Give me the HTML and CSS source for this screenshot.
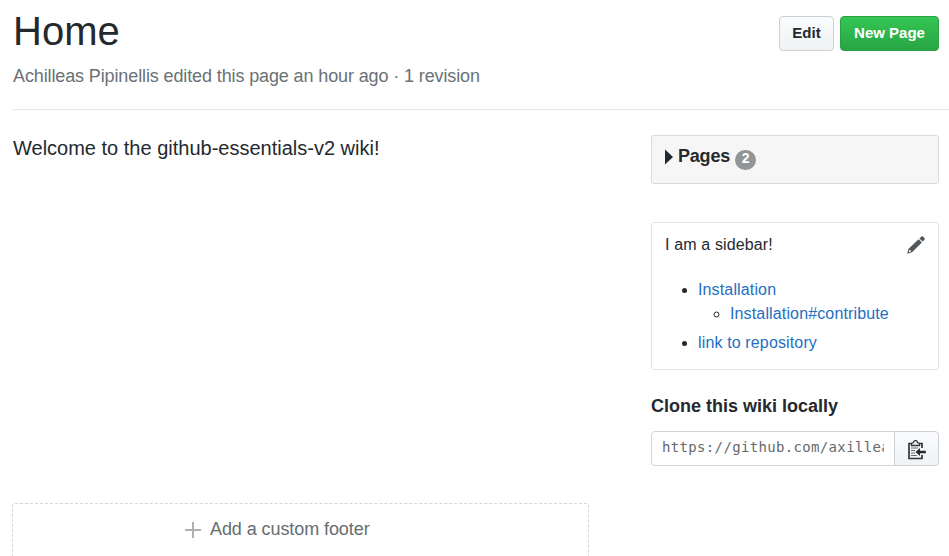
FILE: index.html
```html
<!DOCTYPE html>
<html lang="en">
<head>
<meta charset="utf-8">
<title>Home</title>
<link rel="stylesheet" href="styles.css">
</head>
<body>
<header class="page-head">
  <div class="head-text">
    <h1><span>Home</span></h1>
    <p class="meta"><span>Achilleas Pipinellis edited this page an hour ago · 1 revision</span></p>
  </div>
  <div class="actions">
    <button class="btn">Edit</button>
    <button class="btn btn-primary">New Page</button>
  </div>
</header>
<div class="layout">
  <main>
    <p class="welcome"><span>Welcome to the github-essentials-v2 wiki!</span></p>
    <a class="add-footer">
      <svg width="16" height="16" viewBox="0 0 16 16"><path d="M8 0v16M0 8h16" stroke="#afb0b0" stroke-width="2"/></svg>
      <span>Add a custom footer</span>
    </a>
  </main>
  <aside>
    <section class="pages">
      <svg width="8" height="16" viewBox="0 0 8 16"><path d="M0 0.5L8 8L0 15.5z" fill="#24292e"/></svg>
      <strong>Pages</strong>
      <span class="counter">2</span>
    </section>
    <section class="custom">
      <svg class="pencil" width="18" height="18" viewBox="0 0 18 18"><path fill="#50565a" fill-rule="evenodd" d="M12.4 2.6L14.5.6Q15.2 0 15.9.6L17.5 2.3Q18.1 3 17.5 3.7L15.5 5.6zM11.6 3.2L14.9 6.5L5 16.3L.2 17.7L1.4 13zM2.4 14L1.7 16.3L4 15.6L3.8 14.3z"/></svg>
      <p>I am a sidebar!</p>
      <ul>
        <li><a>Installation</a>
          <ul><li><a>Installation#contribute</a></li></ul>
        </li>
        <li><a>link to repository</a></li>
      </ul>
    </section>
    <h2><span>Clone this wiki locally</span></h2>
    <div class="clone">
      <div class="url"><span>https://github.com/axilleas/github-essentials-v2.wiki.git</span></div>
      <button class="copy" aria-label="Copy">
        <svg width="18" height="20" viewBox="0 0 18 20"><path d="M4 3.5H1V18.5H14V15M11 3.5H14V8" fill="none" stroke="#30363a" stroke-width="1.7"/><path d="M3.5 5.5V3.5L5.5 2.5Q5.7.6 7.5.6T9.5 2.5L11.5 3.5V5.5z" fill="none" stroke="#30363a" stroke-width="1.3"/><path d="M3 8h7M3 10.5h4M3 13h4M3 15.5h6" stroke="#666b6e" stroke-width="1.2"/><path d="M7.5 12L12 8V10.7H17.8V13.3H12V16z" fill="#24292e"/></svg>
      </button>
    </div>
  </aside>
</div>
</body>
</html>
```
FILE: styles.css
```css
* { box-sizing: border-box; }
html { overflow: hidden; }
body {
  margin: 0;
  height: 556px;
  overflow: hidden;
  background: #fff;
  color: #24292e;
  font-family: "Liberation Sans", Arial, sans-serif;
}
h1, h2, p, ul { margin: 0; padding: 0; }
.page-head {
  display: flex;
  justify-content: space-between;
  height: 110px;
  margin-left: 13px;
  padding-right: 10px;
  border-bottom: 1px solid #e5e9e8;
}
h1 { padding-top: 8px; font-size: 40px; line-height: 46px; font-weight: 400; }
.meta {
  padding-top: 12px;
  font-size: 18px;
  line-height: 20px;
  letter-spacing: -.12px;
  color: #6a7176;
  white-space: nowrap;
}
.actions { display: flex; gap: 6px; padding-top: 16px; }
.btn {
  width: 55px;
  height: 35px;
  padding: 0 0 3px;
  border: 1px solid #cdcfd1;
  border-radius: 4px;
  background: linear-gradient(#fafbfc, #eff3f6);
  color: #24292e;
  font: bold 15px "Liberation Sans", Arial, sans-serif;
  white-space: nowrap;
}
.btn-primary {
  width: 99px;
  border-color: #28a044;
  background: linear-gradient(#34c653, #28a544);
  color: #fff;
}
.layout { display: flex; justify-content: space-between; padding: 0 10px 0 12px; }
main { display: flex; flex-direction: column; width: 577px; height: 446px; overflow: hidden; }
.welcome {
  flex: none;
  height: 393px;
  padding: 26px 0 0 1px;
  font-size: 20px;
  line-height: 24px;
  white-space: nowrap;
}
.add-footer {
  display: flex;
  flex: none;
  height: 80px;
  padding: 14px 0 0 172px;
  gap: 9px;
  border: 1px dashed #d4d6d8;
  border-radius: 3px;
  color: #666d71;
  font-size: 18px;
  line-height: 22px;
  letter-spacing: -.08px;
}
.add-footer svg { margin-top: 4px; }
aside { width: 288px; padding-top: 25px; }
.pages {
  display: flex;
  height: 49px;
  padding: 10px 0 0 13px;
  border: 1px solid #d9dadb;
  border-radius: 3px;
  background: #f6f6f6;
  font-size: 18px;
  line-height: 20px;
}
.pages strong { letter-spacing: -.2px; }
.pages svg { margin: 3px 5px 0 0; }
.counter {
  width: 21px;
  height: 20px;
  margin: 4px 0 0 5px;
  border-radius: 10px;
  background: #929596;
  color: #fff;
  font-size: 14px;
  font-weight: 700;
  line-height: 17px;
  text-align: center;
}
.custom {
  position: relative;
  height: 148px;
  margin-top: 38px;
  padding: 11px 13px 0;
  border: 1px solid #e2e3e4;
  border-radius: 3px;
  font-size: 16px;
  line-height: 22px;
  letter-spacing: .14px;
}
.pencil { position: absolute; top: 13px; right: 13px; }
.custom ul { padding-left: 33px; }
.custom p + ul { padding-top: 23px; }
.custom ul ul { padding: 2px 0 0 32px; }
.custom li + li { margin-top: 7px; }
.custom a { color: #2370c2; }
h2 { padding-top: 25px; font-size: 18px; line-height: 22px; white-space: nowrap; }
.clone { display: flex; height: 35px; margin-top: 14px; }
.url {
  width: 244px;
  padding: 5px 10px 0;
  border: 1px solid #d1d5da;
  border-radius: 4px 0 0 4px;
  color: #666a6c;
  font: 14px/20px "DejaVu Sans Mono", monospace;
}
.url span { display: block; overflow: hidden; white-space: nowrap; letter-spacing: .34px; }
.copy {
  width: 45px;
  margin-left: -1px;
  padding: 5px 0 0;
  border: 1px solid #cdd1d6;
  border-radius: 0 4px 4px 0;
  background: linear-gradient(#fafbfc, #eff3f6);
}
```
